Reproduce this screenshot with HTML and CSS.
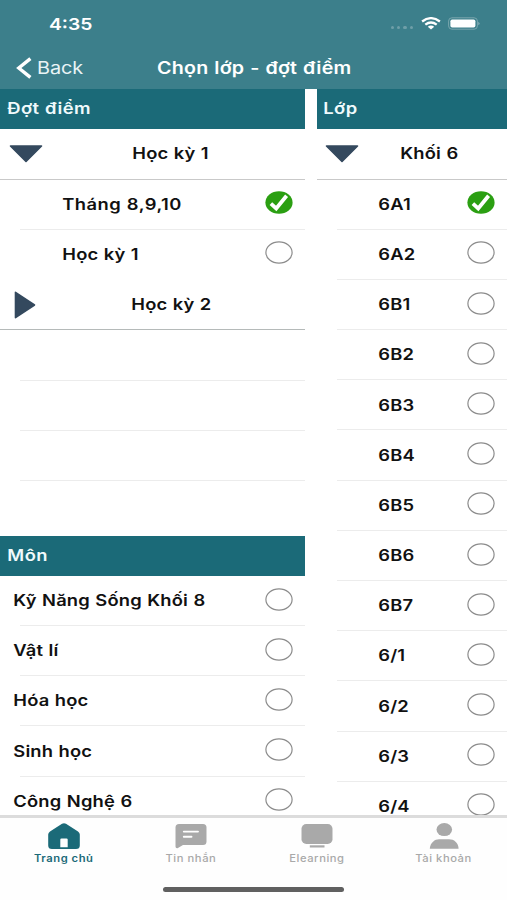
FILE: index.html
```html
<!DOCTYPE html>
<html lang="vi">
<head>
<meta charset="utf-8">
<title>Chọn lớp - đợt điểm</title>
<link rel="stylesheet" href="styles.css">
</head>
<body>
<svg class="defs" width="0" height="0">
  <symbol id="radio" viewBox="0 0 28 23"><ellipse cx="14" cy="11.5" rx="13.1" ry="10.7" fill="#fff" stroke="#8c8c8c" stroke-width="1.2"/></symbol>
  <symbol id="checked" viewBox="0 0 28 23"><ellipse cx="14" cy="11.5" rx="13.6" ry="11.3" fill="#2b9f12"/><path d="M5.9 12.6 11.2 17.4 21.6 4.8" fill="none" stroke="#fff" stroke-width="3.8"/></symbol>
  <symbol id="down" viewBox="0 0 34 18"><path d="M1.5 1H32.5L17 16.4Z" fill="#34495e" stroke="#34495e" stroke-width="1.6" stroke-linejoin="round"/></symbol>
</svg>
<div class="app">
  <header class="top">
    <div class="status">
      <span class="time t">4:35</span>
      <span class="dots"><i></i><i></i><i></i><i></i></span>
      <svg class="wifi" width="20" height="13" viewBox="0 0 20 13"><g fill="none" stroke="#fff" stroke-width="2.3"><path d="M1.1 4.5Q10-2.2 18.9 4.5"/><path d="M4.3 7.7Q10 3.3 15.7 7.7"/></g><path d="M6.8 9.7Q10 7.4 13.2 9.7L10 12.6Z" fill="#fff"/></svg>
      <svg class="battery" width="32" height="13" viewBox="0 0 32 13"><rect x=".6" y=".8" width="28.8" height="11.4" rx="3.3" fill="none" stroke="#79a6ae" stroke-width="1"/><rect x="2.4" y="2.4" width="25" height="8.2" rx="1.8" fill="#fff"/><path d="M30.5 4.7Q32.3 6.5 30.5 8.3Z" fill="#a5c4c9"/></svg>
    </div>
    <div class="nav">
      <svg width="16" height="22" viewBox="0 0 16 22"><path d="M14.4 1.6 2.8 11 14.4 20.4" fill="none" stroke="#fff" stroke-width="3.4"/></svg>
      <span class="back t">Back</span>
      <h1 class="t">Chọn lớp - đợt điểm</h1>
    </div>
  </header>
  <main class="columns">
    <div class="col left">
      <h2 class="bar"><span class="t">Đợt điểm</span></h2>
      <div class="group"><svg class="arrow"><use href="#down"/></svg><span class="t">Học kỳ 1</span></div>
      <div class="row inset"><span class="t wide">Tháng 8,9,10</span><svg class="mark"><use href="#checked"/></svg></div>
      <div class="row inset plain"><span class="t">Học kỳ 1</span><svg class="mark"><use href="#radio"/></svg></div>
      <div class="group closed"><svg class="right" viewBox="0 0 22 28"><path d="M1.5 1.3V26.7L20.5 14Z" fill="#34495e" stroke="#34495e" stroke-width="1.6" stroke-linejoin="round"/></svg><span class="t">Học kỳ 2</span></div>
      <div class="row"></div>
      <div class="row"></div>
      <div class="row"></div>
      <h2 class="bar subject"><span class="t">Môn</span></h2>
      <div class="row"><span class="t">Kỹ Năng Sống Khối 8</span><svg class="mark"><use href="#radio"/></svg></div>
      <div class="row"><span class="t">Vật lí</span><svg class="mark"><use href="#radio"/></svg></div>
      <div class="row"><span class="t">Hóa học</span><svg class="mark"><use href="#radio"/></svg></div>
      <div class="row"><span class="t">Sinh học</span><svg class="mark"><use href="#radio"/></svg></div>
      <div class="row"><span class="t">Công Nghệ 6</span><svg class="mark"><use href="#radio"/></svg></div>
    </div>
    <div class="col classes">
      <h2 class="bar"><span class="t">Lớp</span></h2>
      <div class="group"><svg class="arrow"><use href="#down"/></svg><span class="t">Khối 6</span></div>
      <div class="row"><span class="t">6A1</span><svg class="mark"><use href="#checked"/></svg></div>
      <div class="row"><span class="t">6A2</span><svg class="mark"><use href="#radio"/></svg></div>
      <div class="row"><span class="t">6B1</span><svg class="mark"><use href="#radio"/></svg></div>
      <div class="row"><span class="t">6B2</span><svg class="mark"><use href="#radio"/></svg></div>
      <div class="row"><span class="t">6B3</span><svg class="mark"><use href="#radio"/></svg></div>
      <div class="row"><span class="t">6B4</span><svg class="mark"><use href="#radio"/></svg></div>
      <div class="row"><span class="t">6B5</span><svg class="mark"><use href="#radio"/></svg></div>
      <div class="row"><span class="t">6B6</span><svg class="mark"><use href="#radio"/></svg></div>
      <div class="row"><span class="t">6B7</span><svg class="mark"><use href="#radio"/></svg></div>
      <div class="row"><span class="t">6/1</span><svg class="mark"><use href="#radio"/></svg></div>
      <div class="row"><span class="t">6/2</span><svg class="mark"><use href="#radio"/></svg></div>
      <div class="row"><span class="t">6/3</span><svg class="mark"><use href="#radio"/></svg></div>
      <div class="row"><span class="t">6/4</span><svg class="mark"><use href="#radio"/></svg></div>
    </div>
  </main>
  <footer class="bottom">
    <nav class="tabs">
      <a class="tab active"><svg width="34" height="28" viewBox="0 0 34 28"><path fill-rule="evenodd" d="M15 1.8Q17 .6 19 1.8L31 9.4Q32.8 10.6 32.8 12.5V23.5Q32.8 27 29 27H5Q1.2 27 1.2 23.5V12.5Q1.2 10.6 3 9.4ZM14.5 16.4Q13.3 16.4 13.3 17.6V25.3H20.7V17.6Q20.7 16.4 19.5 16.4Z" fill="currentColor"/></svg><span>Trang chủ</span></a>
      <a class="tab"><svg width="34" height="28" viewBox="0 0 34 28"><path d="M5 2H29Q32.5 2 32.5 5.5V19.5Q32.5 23 29 23H9L3.5 26.2Q1.5 26.5 1.5 24.5V5.5Q1.5 2 5 2Z" fill="currentColor"/><path d="M9.8 9.6H24M9.8 14.8H17.5" stroke="#fff" stroke-width="1.9" stroke-linecap="round"/></svg><span>Tin nhắn</span></a>
      <a class="tab"><svg width="34" height="28" viewBox="0 0 34 28"><rect x="1.5" y="2" width="31" height="20" rx="4.8" fill="currentColor"/><path d="M9.8 24.4H24.5" stroke="currentColor" stroke-width="2.2"/></svg><span>Elearning</span></a>
      <a class="tab"><svg width="34" height="28" viewBox="0 0 34 28"><ellipse cx="17.3" cy="7.6" rx="7.8" ry="6.5" fill="currentColor"/><path d="M2.8 26.8C3.2 20.5 8 17.3 12 17.3H22C27 17.3 31.2 20.5 31.6 26.8Z" fill="currentColor"/></svg><span>Tài khoản</span></a>
    </nav>
    <div class="indicator"></div>
  </footer>
</div>
</body>
</html>
```
FILE: styles.css
```css
* { box-sizing: border-box; }
body { margin: 0; background: #fff; font-family: Inter, "Noto Sans", sans-serif; color: #111; }
.defs { position: absolute; }
.app { width: 507px; height: 900px; display: flex; flex-direction: column; overflow: hidden; }
.t { display: inline-block; white-space: nowrap; line-height: 16px; letter-spacing: .14px; word-spacing: .55px; transform: scaleX(1.17); transform-origin: left center; }
.columns .t { transform: translate(.3px, .4px) scaleX(1.17); }
.top { height: 89px; flex: none; background: #3c7f8b; color: #fff; }
.status { height: 46px; padding: 1px 27px 0 49px; display: flex; align-items: center; }
.time { font-size: 16.5px; font-weight: 600; letter-spacing: 0; }
.dots { display: flex; gap: 3px; margin: 8px 8px 0 auto; }
.dots i { width: 3.3px; height: 3.3px; border-radius: 50%; background: #6f9fa8; }
.wifi { margin-right: 7px; }
.nav { height: 43px; padding-left: 16px; display: flex; align-items: center; }
.back { margin-left: 5px; width: 115px; font-size: 17px; letter-spacing: -.1px; color: #e9f4f6; }
h1 { margin: 0 0 0 5px; font-size: 16.8px; font-weight: 600; }
h1.t { line-height: 24px; letter-spacing: .2px; word-spacing: .6px; }
.columns { flex: 1; min-height: 0; display: flex; gap: 12.5px; overflow: hidden; }
.left { width: 304.5px; flex: none; }
.classes { flex: 1; }
.bar { height: 40.3px; margin: 0; padding: 0 0 0 6.8px; background: #1b6a78; color: #f0fafc; display: flex; align-items: center; font-size: 15.7px; font-weight: 600; }
.bar .t { letter-spacing: .35px; }
.classes .bar { padding-left: 5.5px; }
.group { height: 50.4px; display: flex; align-items: center; border-bottom: 1.6px solid #c9c9c9; font-size: 15.7px; font-weight: 600; }
.arrow { width: 34px; height: 18px; margin-left: 9px; flex: none; }
.group .t { margin-left: 89px; }
.classes .arrow { margin-left: 7.5px; }
.classes .group .t { margin-left: 41.3px; }
.right { width: 22px; height: 28px; margin-left: 13.5px; flex: none; }
.closed { height: 50.2px; border-bottom: 1px solid #b5bab9; }
.closed .t { margin-left: 95px; }
.closed + .row { height: 50.7px; }
.row { height: 50.2px; padding-right: 12px; padding-left: 12.8px; display: flex; align-items: center; font-size: 15.7px; font-weight: 600; background: linear-gradient(#ececec, #ececec) 20px 100% / 100% 1.2px no-repeat; }
.inset { padding-left: 61.7px; }
.wide { letter-spacing: .38px; }
.plain { background: none; }
.classes .row { padding-left: 60.6px; }
.mark { width: 28px; height: 23px; margin: 0 0 4.1px auto; flex: none; }
.subject { margin-top: 54.4px; }
.bottom { height: 85px; flex: none; background: #fefefe; border-top: 3px solid #dcdcdc; }
.tabs { height: 51px; display: flex; padding-left: 1px; }
.tab { flex: 1; display: flex; flex-direction: column; align-items: center; color: #a9a9a9; padding-top: 4px; font-size: 10.1px; font-weight: 550; letter-spacing: .5px; }
.tab.active { color: #1b6a78; font-weight: 600; }
.tab span { margin-top: 1px; line-height: 14px; white-space: nowrap; transform: scaleX(1.11); }
.indicator { width: 181px; height: 5px; margin: 18px 0 0 163px; border-radius: 3px; background: #606060; }
```
